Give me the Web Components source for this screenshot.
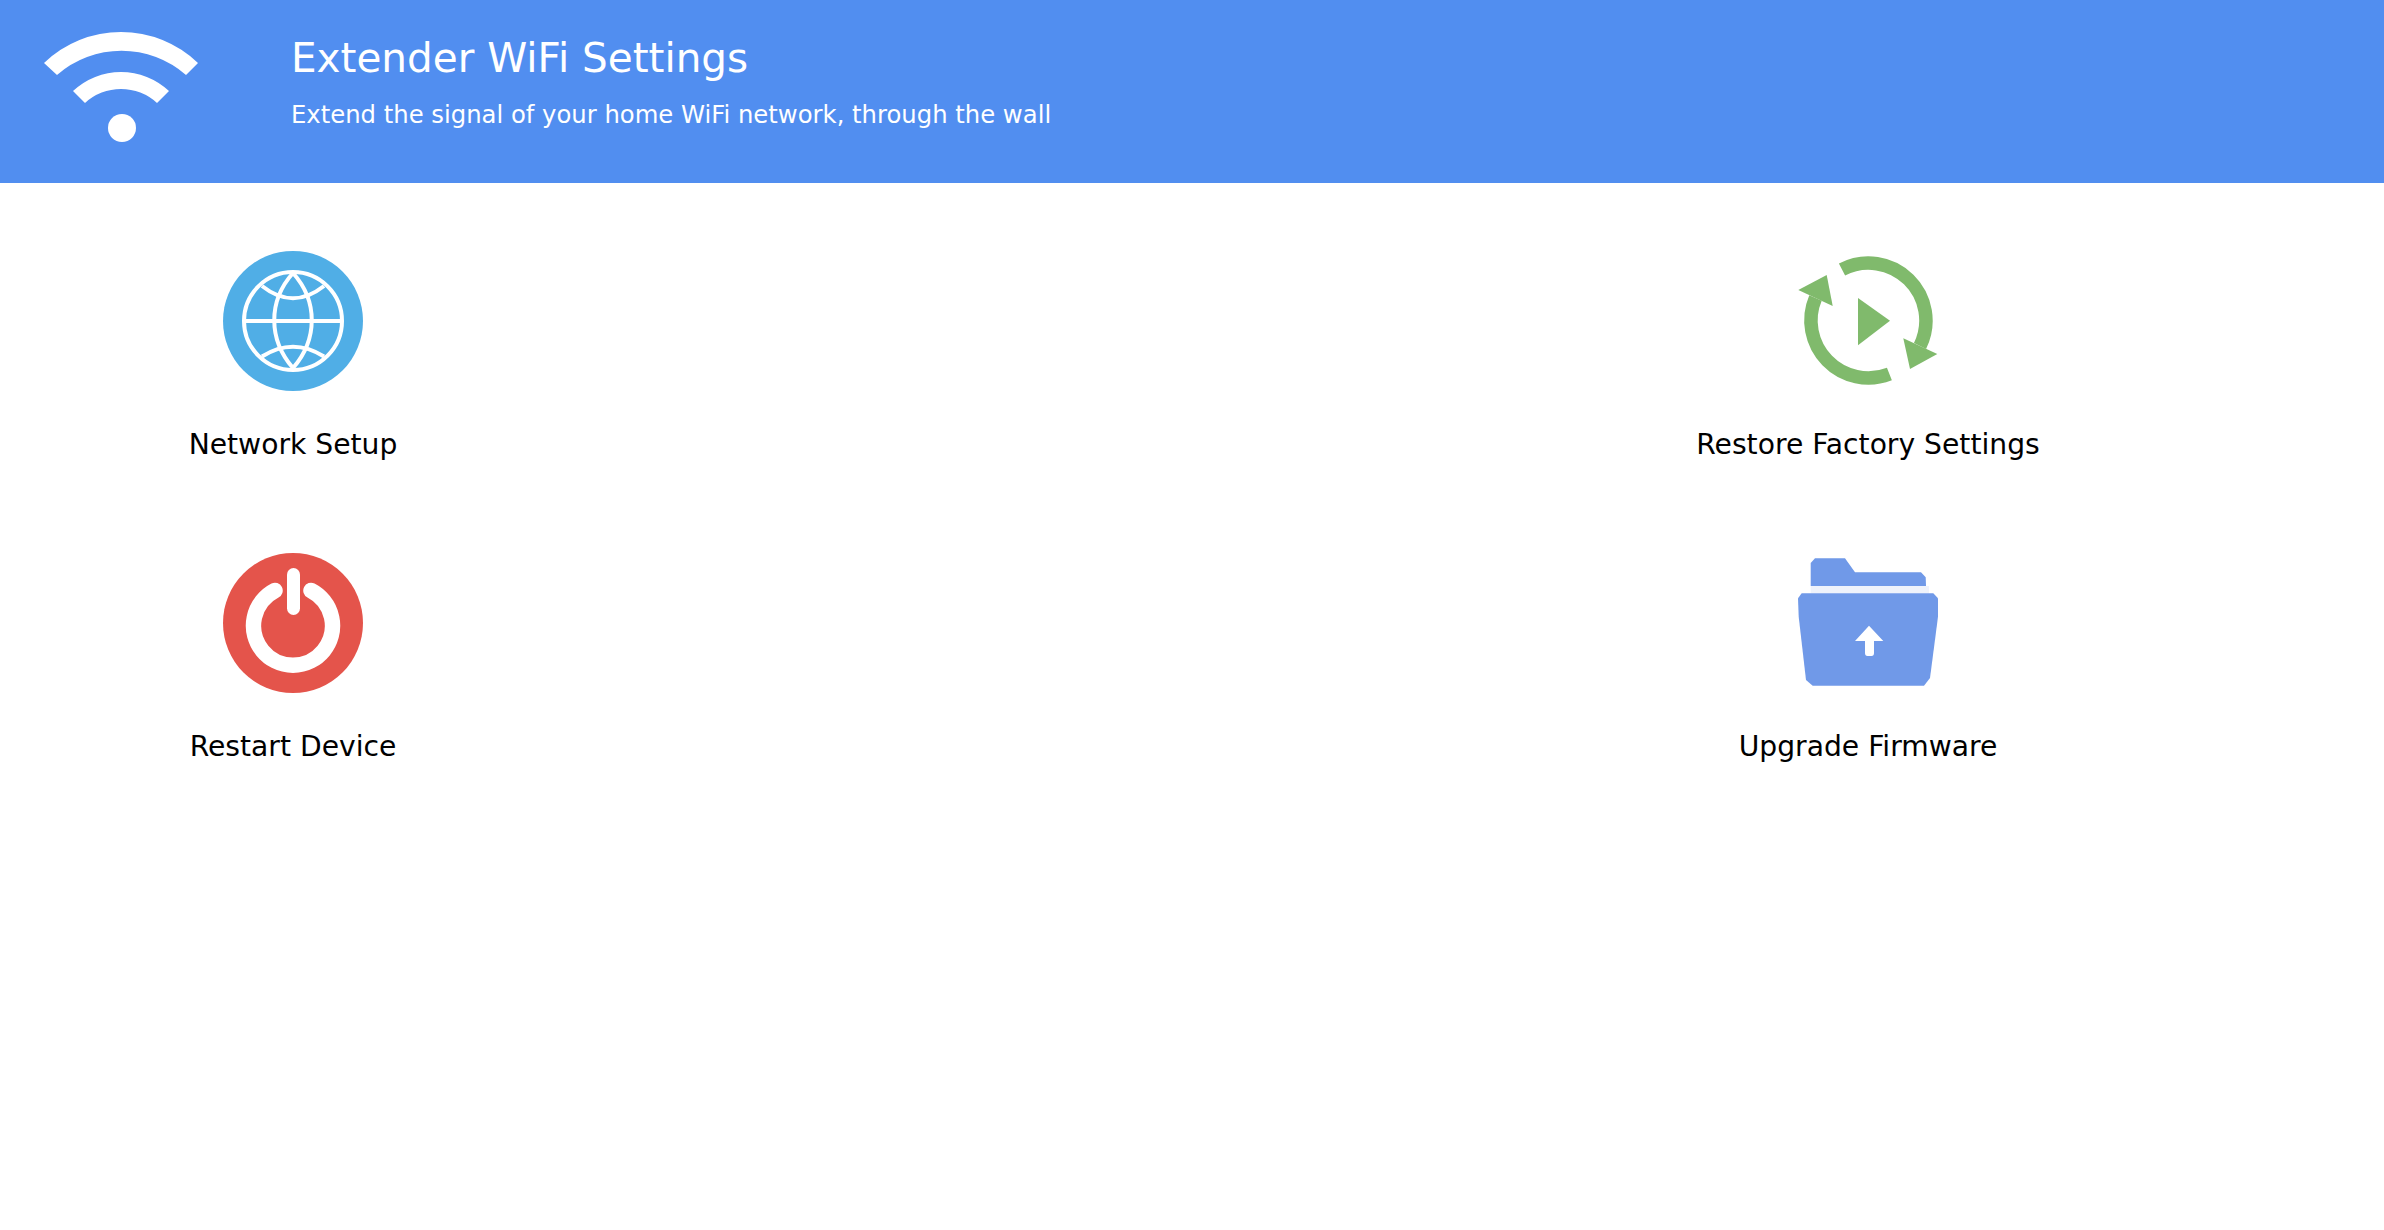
<!DOCTYPE html>
<html lang="en">
<head>
<meta charset="utf-8">
<title>Extender WiFi Settings</title>
<style>
  html, body { margin: 0; background: #fff; }
  body { font-family: "DejaVu Sans", Verdana, sans-serif; }
</style>
</head>
<body>
<ext-header heading="Extender WiFi Settings" subheading="Extend the signal of your home WiFi network, through the wall"></ext-header>
<ext-menu>
  <ext-tile icon="globe">Network Setup</ext-tile>
  <ext-tile icon="restore" column="3">Restore Factory Settings</ext-tile>
  <ext-tile icon="power">Restart Device</ext-tile>
  <ext-tile icon="folder" column="3">Upgrade Firmware</ext-tile>
</ext-menu>

<script>
// icons are drawn in a 140x140 box
const ICONS = {
    globe: `
        <circle cx="70" cy="70" r="70" fill="#50aee6"/>
        <g fill="none" stroke="#fff" stroke-width="4">
            <circle cx="70" cy="70" r="49"/>
            <path d="M21 70H119"/>
            <path d="M70 22C45 50 45 88 70 117C95 88 95 50 70 22Z"/>
            <path d="M39 35Q70 59.500 101 35"/>
            <path d="M39 105.500Q70 86 101 105.500"/>
        </g>`,
    power: `
        <circle cx="70" cy="70" r="70" fill="#e4544b"/>
        <path d="M52 37.500A39.500 39.500 0 1 0 88 37.500" fill="none" stroke="#fff" stroke-width="15.500" stroke-linecap="round"/>
        <path d="M70.500 21.500V55.500" fill="none" stroke="#fff" stroke-width="13" stroke-linecap="round"/>`,
    restore: `
        <g fill="none" stroke="#80ba6c" stroke-width="13.500">
            <path d="M44 18.500A57.500 57.500 0 0 1 122 95"/>
            <path d="M91.400 123A57.500 57.500 0 0 1 17.500 47"/>
        </g>
        <g fill="#80ba6c">
            <path d="M105.300 87.300L139.300 103L112 118Z"/>
            <path d="M0.300 39L28.700 24L34.700 55Z"/>
            <path d="M60 47L92 69.700L60 94.300Z"/>
        </g>`,
    folder: `
        <g transform="translate(0 -2)">
            <path d="M12.700 12L17 7.300H47L57 21.300H123L127.700 26.300L128 35H12.700Z" fill="#7099e8"/>
            <path d="M12.700 35H131V42.300H12.700Z" fill="#eef2fb"/>
            <path d="M0 47.300L3.700 42.300H135.300L140 47.300V65.700L132 127L126 134.700H14.700L8 129L0.700 65.700Z" fill="#7099e8"/>
            <path d="M71 74.700L85.300 90H76V102Q76 105 73.500 105H69.500Q67 105 67 102V90H57Z" fill="#fff"/>
        </g>`
};

class ExtHeader extends HTMLElement {
    constructor() {
        super();
        this.attachShadow({ mode: 'open' });
    }

    connectedCallback() {
        this.shadowRoot.innerHTML = `
            <style>
                :host {
                    display: flex;
                    align-items: flex-start;
                    height: 183px;
                    background: #518ef0;
                    color: #fff;
                }
                svg { flex: none; display: block; width: 291px; height: 182px; }
                .text { display: flex; flex-direction: column; padding-top: 33px; }
                h1 { margin: 0; font-size: 40.500px; font-weight: 400; line-height: 50px; }
                p { margin: 17px 0 0; font-size: 24.300px; line-height: 30px; }
            </style>
            <svg viewBox="0 0 291 182" aria-hidden="true">
                <g fill="#fff">
                    <path d="M44 63A111 111 0 0 1 198 63L186 75A98 98 0 0 0 57 75Z"/>
                    <path d="M73 91A70 70 0 0 1 169 91L157 103A53 53 0 0 0 85 103Z"/>
                    <circle cx="122" cy="128" r="14"/>
                </g>
            </svg>
            <div class="text">
                <h1>${this.getAttribute('heading')}</h1>
                <p>${this.getAttribute('subheading')}</p>
            </div>
        `;
    }
}

class ExtMenu extends HTMLElement {
    constructor() {
        super();
        this.attachShadow({ mode: 'open' });
    }

    connectedCallback() {
        this.shadowRoot.innerHTML = `
            <style>
                :host {
                    display: grid;
                    grid-template-columns: 586px 1fr 1032px;
                    row-gap: 91px;
                    padding-top: 68px;
                }
            </style>
            <slot></slot>
        `;
    }
}

class ExtTile extends HTMLElement {
    constructor() {
        super();
        this.attachShadow({ mode: 'open' });
    }

    connectedCallback() {
        const icon = ICONS[this.getAttribute('icon')] || '';
        const column = this.getAttribute('column') || '1';
        this.shadowRoot.innerHTML = `
            <style>
                :host {
                    display: flex;
                    flex-direction: column;
                    align-items: center;
                    grid-column: ${column};
                    color: #000;
                    font-size: 28.200px;
                    line-height: 34px;
                }
                svg { display: block; width: 140px; height: 140px; margin-bottom: 37px; }
            </style>
            <svg viewBox="0 0 140 140" aria-hidden="true">${icon}</svg>
            <slot></slot>
        `;
    }
}

customElements.define('ext-header', ExtHeader);
customElements.define('ext-menu', ExtMenu);
customElements.define('ext-tile', ExtTile);
</script>
</body>
</html>
